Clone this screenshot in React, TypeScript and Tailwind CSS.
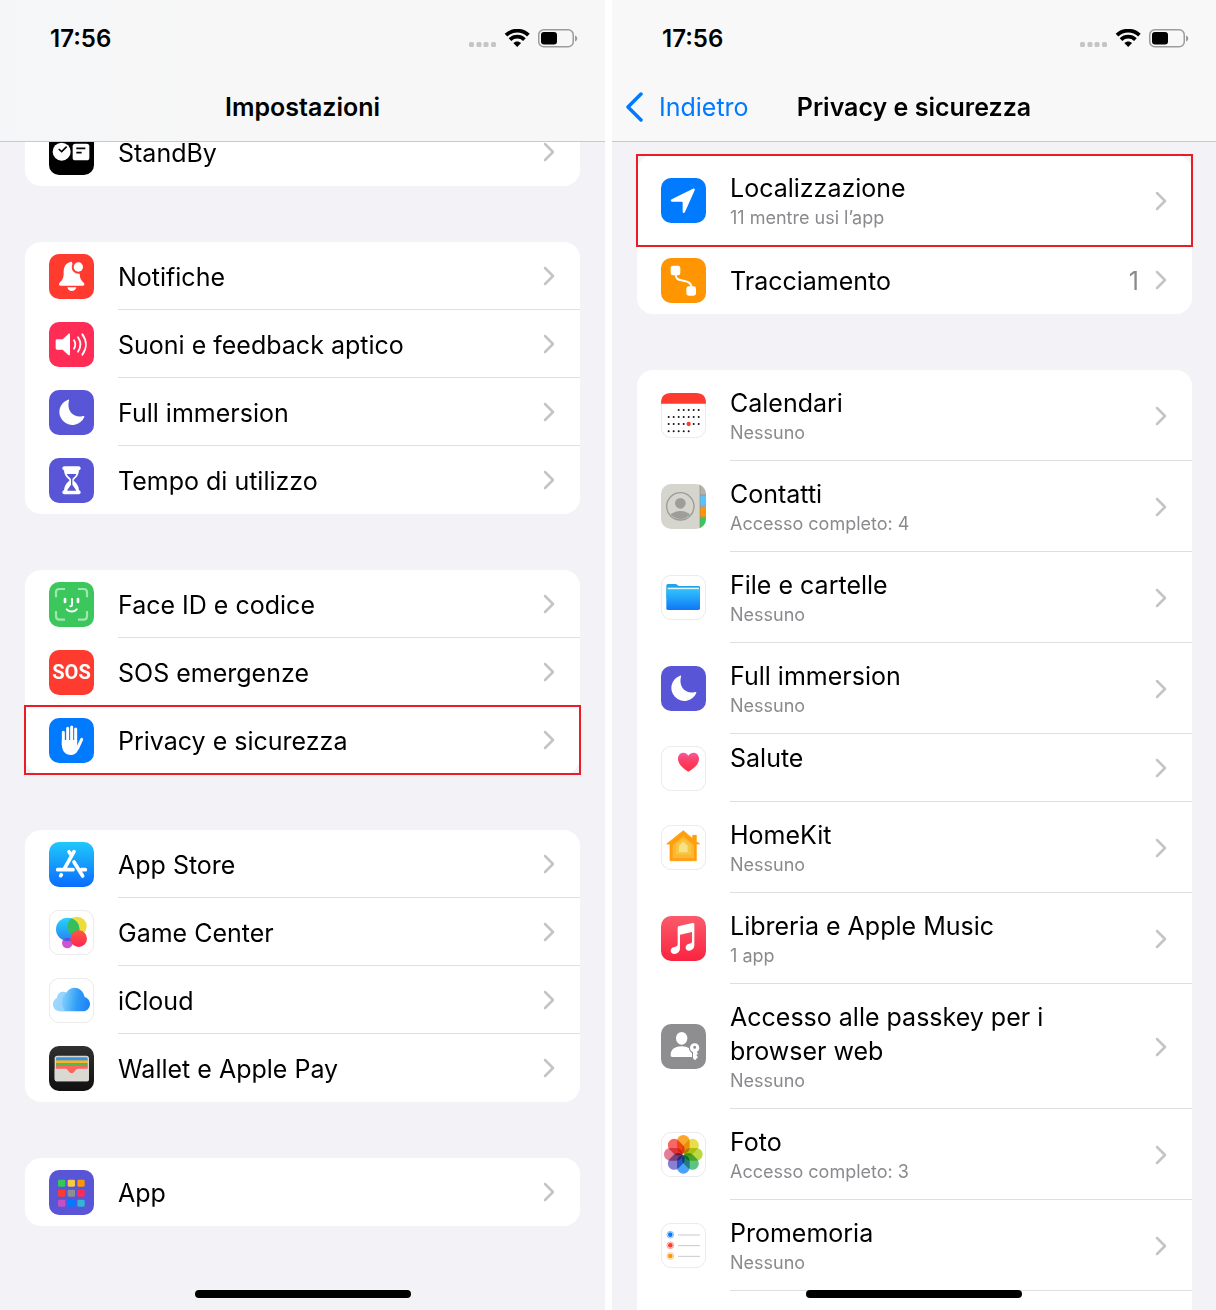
import type { ReactNode } from "react";

type Row = {
  label: string;
  icon: ReactNode;
  detail?: string;
  value?: string;
  highlighted?: boolean;
  raised?: boolean;
};

function Tile({ fill, border, children }: { fill: string; border?: boolean; children?: ReactNode }) {
  return (
    <svg viewBox="0 0 135 135" className="size-[45px] shrink-0" aria-hidden="true">
      <rect
        x={border ? 1 : 0}
        y={border ? 1 : 0}
        width={border ? 133 : 135}
        height={border ? 133 : 135}
        rx="30"
        fill={fill}
        stroke={border ? "#e9e9eb" : "none"}
        strokeWidth="3"
      />
      {children}
    </svg>
  );
}

const StandByIcon = () => (
  <Tile fill="#000">
    <circle cx="38" cy="65" r="27" fill="#fff" />
    <path d="M29 57l9 8 15-15" fill="none" stroke="#000" strokeWidth="5" />
    <rect x="71" y="41" width="50" height="50" rx="8" fill="#fff" />
    <path d="M82 55h27M82 68h16" stroke="#000" strokeWidth="5" />
  </Tile>
);

const BellIcon = () => (
  <Tile fill="#ff3b30">
    <path d="M68 23C50 25 44 38 44 55c0 17-3 23-12 31-4 4-2 9 3 9h66c5 0 7-5 3-9-9-8-11-14-12-27L75 40z" fill="#fff" />
    <circle cx="88" cy="39" r="20" fill="#ff3b30" />
    <circle cx="88" cy="39" r="14" fill="#fff" />
    <path d="M55 100h27c-1 7-7 11-13.500 11S56 107 55 100z" fill="#fff" />
  </Tile>
);

const SoundIcon = () => (
  <Tile fill="#ff2d55">
    <path d="M24 52h17l17-16c3-3 5-1 5 2v58c0 4-3 5-6 2L41 83H24c-2 0-4-2-4-4V56c0-2 2-4 4-4z" fill="#fff" />
    <g fill="none" stroke="#fff" strokeWidth="5.500" strokeLinecap="round">
      <path d="M75 55c5 8 5 17 0 25" />
      <path d="M87 46c9 13 9 30 0 43" />
      <path d="M100 37c14 19 14 42 0 61" />
    </g>
  </Tile>
);

const MoonIcon = () => (
  <Tile fill="#5856d6">
    <path d="M57 29c3-1 4 1 3 3-8 30 14 54 42 46 3-1 5 1 4 3A39 39 0 1 1 57 29z" fill="#fff" />
  </Tile>
);

const HourglassIcon = () => (
  <Tile fill="#5856d6">
    <path
      fillRule="evenodd"
      fill="#fff"
      d="M46 25h43c4 0 6 3 6 6s-2 5-5 6c-1 15-8 22-14 27-3 2-3 4 0 6 6 5 13 13 14 27 3 1 5 3 5 6s-2 6-6 6H46c-4 0-6-3-6-6s2-5 5-6c1-14 8-22 14-27 3-2 3-4 0-6-6-5-13-12-14-27-3-1-5-3-5-6s2-6 6-6zM53 48c3 6 7 9 11 13 2 2 2 4 2 7v12L55 96v2h26v-2L70 80V68c0-3 0-5 2-7 4-4 8-7 10-13z"
    />
  </Tile>
);

const FaceIcon = () => (
  <Tile fill="#3cc75c">
    <path
      d="M21 46V31c0-7 3-10 10-10h17M87 21h17c7 0 10 3 10 10v15M114 87v16c0 7-3 10-10 10H87M48 113H31c-7 0-10-3-10-10V87"
      fill="none"
      stroke="#a3e5b2"
      strokeWidth="6.500"
    />
    <g fill="none" stroke="#fff" strokeLinecap="round" strokeWidth="6">
      <path d="M48 51v9M87 51v9" strokeWidth="8" />
      <path d="M69 51v19c0 2-2 3-5 3" />
      <path d="M53 82c9 9 22 9 30 0" />
    </g>
  </Tile>
);

const SosIcon = () => (
  <span className="flex size-[45px] shrink-0 items-center justify-center rounded-[10px] bg-[#ff3b30] font-['Liberation_Sans_Narrow','Roboto',sans-serif] text-[20px] leading-none font-bold text-white">
    SOS
  </span>
);

const HandIcon = () => (
  <Tile fill="#007aff">
    <g stroke="#fff" strokeLinecap="round" strokeLinejoin="round" fill="none">
      <path d="M43 43v38M56 31v40M68 27v44M80 33v40" strokeWidth="9" />
      <path d="M98 64L86 90" strokeWidth="9" />
    </g>
    <path d="M38.500 66H84.500v18l10-9c-6 21-11 36-28 36-19 0-28-13-28-32z" fill="#fff" />
  </Tile>
);

const StoreIcon = () => (
  <Tile fill="url(#store)">
    <defs>
      <linearGradient id="store" x2="0" y2="1">
        <stop stopColor="#20c8fb" />
        <stop offset="1" stopColor="#0a6cff" />
      </linearGradient>
    </defs>
    <g stroke="#fff" strokeWidth="11" strokeLinecap="round" fill="none">
      <path d="M75 29L45 82M60 29l8 12M26 83h46M37 98l-2 3M75 60l26 42M97 83h12" />
    </g>
  </Tile>
);

const GameIcon = () => (
  <Tile fill="#fff" border>
    <defs>
      <linearGradient id="game" x2="0" y2="1">
        <stop stopColor="#2bd2fa" />
        <stop offset="1" stopColor="#2583f5" />
      </linearGradient>
      <linearGradient id="gamepink" x2="0" y2="1">
        <stop stopColor="#fb5a3c" />
        <stop offset="1" stopColor="#ff2459" />
      </linearGradient>
      <clipPath id="gameblue">
        <circle cx="56" cy="58" r="35" />
      </clipPath>
    </defs>
    <circle cx="55" cy="99" r="16" fill="#cb54d0" />
    <circle cx="84" cy="49" r="29" fill="#efdc3a" />
    <circle cx="56" cy="58" r="35" fill="url(#game)" />
    <g clipPath="url(#gameblue)">
      <circle cx="84" cy="49" r="29" fill="#37be5c" />
      <circle cx="55" cy="99" r="16" fill="#6a4be0" />
    </g>
    <circle cx="89" cy="86" r="25" fill="url(#gamepink)" />
  </Tile>
);

const CloudIcon = () => (
  <Tile fill="#fff" border>
    <defs>
      <linearGradient id="cloud" x1="12" x2="123" y1="60" y2="76" gradientUnits="userSpaceOnUse">
        <stop stopColor="#a4d8ff" />
        <stop offset=".35" stopColor="#6dc4fb" />
        <stop offset=".65" stopColor="#2f9df6" />
        <stop offset="1" stopColor="#1f80f8" />
      </linearGradient>
    </defs>
    <path d="M34 100c-12 0-22-9-22-21 0-9 6-17 13-20 0-15 15-22 27-15 13-22 47-20 55 13 9 3 16 11 16 21 0 12-9 22-21 22z" fill="url(#cloud)" />
    <path d="M52 44c-9-5-27-1-27 15-7 3-13 11-13 20 0 12 10 21 22 21h15c-12-18-13-38 3-56z" fill="#a4d8ff" opacity=".65" />
  </Tile>
);

const WalletIcon = () => (
  <Tile fill="url(#wallet)">
    <defs>
      <linearGradient id="wallet" x2="0" y2="1">
        <stop stopColor="#303030" />
        <stop offset="1" stopColor="#101010" />
      </linearGradient>
    </defs>
    <rect x="17" y="29" width="103" height="77" rx="8" fill="#d9d8d2" />
    <rect x="21" y="34" width="95" height="13" rx="4" fill="#3296e3" />
    <path d="M21 43h95v12H21z" fill="#f9b32a" />
    <path d="M21 51h95v12H21z" fill="#52b755" />
    <path d="M21 59h95v10H86c-6 0-8 13-18 13S56 69 50 69H21z" fill="#fb665f" />
    <path d="M17 68h33c7 0 8 13 18 13s12-13 19-13h33v30c0 6-3 8-8 8H25c-6 0-8-3-8-8z" fill="#d9d8d2" />
  </Tile>
);

const appColors = ["#35c759", "#f7c945", "#ff9500", "#ff3b30", "#8e8e93", "#ff2d55", "#c54fc5", "#007aff", "#30b6d6"];

const AppsIcon = () => (
  <Tile fill="#5856d6">
    {appColors.map((color, i) => (
      <rect key={color} x={27 + (i % 3) * 29} y={29 + Math.floor(i / 3) * 30} width="22" height="21" rx="4" fill={color} />
    ))}
  </Tile>
);

const LocationIcon = () => (
  <Tile fill="#007aff">
    <path d="M96 32c4-2 7 1 5 5l-29 65c-2 4-7 4-7-1V74c0-2-1-3-3-3H33c-5 0-5-5-1-7z" fill="#fff" />
  </Tile>
);

const TrackingIcon = () => (
  <Tile fill="#ff9500">
    <rect x="29" y="23" width="29" height="29" rx="7" fill="#fff" />
    <rect x="76" y="85" width="29" height="28" rx="7" fill="#fff" />
    <path d="M44 48c0 16 8 17 22 20s25 5 25 20" fill="none" stroke="#fff" strokeWidth="6" />
  </Tile>
);

const calendarDots = [
  [51, 2, 6],
  [72, 0, 6],
  [93, 0, 6],
  [115, 0, 4],
].flatMap(([y, from, to]) => Array.from({ length: to - from + 1 }, (_, i) => ({ x: 23 + (from + i) * 15, y })));

const CalendarIcon = () => (
  <Tile fill="#fff" border>
    <path d="M0 32C0 10 10 0 30 0h75c20 0 30 10 30 32z" fill="#ff3b30" />
    {calendarDots.map(({ x, y }) => (
      <circle key={`${x}-${y}`} cx={x} cy={y} r="3" fill="#111" />
    ))}
    <circle cx="83" cy="93" r="6.500" fill="#ff3b30" />
  </Tile>
);

const ContactsIcon = () => (
  <Tile fill="#d5d5ce">
    <defs>
      <clipPath id="tile">
        <rect width="135" height="135" rx="30" />
      </clipPath>
      <clipPath id="avatar">
        <circle cx="58" cy="67" r="38" />
      </clipPath>
    </defs>
    <g clipPath="url(#tile)">
      <path d="M117 0h18v33h-18z" fill="#b3b3ae" />
      <path d="M117 33h18v34h-18z" fill="#5ac1fb" />
      <path d="M117 68h18v32h-18z" fill="#ff9500" />
      <path d="M117 100h18v35h-18z" fill="#3ac759" />
      <path d="M117 0v135M117 33h18M117 67h18M117 99h18" stroke="#8b8b86" strokeWidth="2" />
    </g>
    <circle cx="58" cy="67" r="41" fill="none" stroke="#9d9d99" strokeWidth="4" />
    <circle cx="58" cy="58" r="16" fill="#9d9d99" />
    <ellipse cx="58" cy="103" rx="34" ry="22" fill="#9d9d99" clipPath="url(#avatar)" />
  </Tile>
);

const FilesIcon = () => (
  <Tile fill="#fff" border>
    <defs>
      <linearGradient id="folder" x2="0" y2="1">
        <stop stopColor="#2fc3fa" />
        <stop offset="1" stopColor="#1077f8" />
      </linearGradient>
    </defs>
    <path d="M16 33c0-4 2-6 6-6h20c7 0 7 6 14 6h56c4 0 5 2 5 6v30H16z" fill="#1fa4e8" />
    <path d="M20 38h94v6H20z" fill="#e4f6fd" />
    <path d="M16 43h101v57c0 4-2 5-5 5H21c-4 0-5-2-5-5z" fill="url(#folder)" />
  </Tile>
);

const HealthIcon = () => (
  <Tile fill="#fff" border>
    <defs>
      <linearGradient id="heart" x2="0" y2="1">
        <stop stopColor="#f559a0" />
        <stop offset=".35" stopColor="#fa4470" />
        <stop offset="1" stopColor="#ff2d3c" />
      </linearGradient>
    </defs>
    <path d="M82 77C71 70 51 57 51 38c0-20 23-24 31-9 9-15 32-11 32 9 0 19-20 32-32 39z" fill="url(#heart)" />
  </Tile>
);

const HomeIcon = () => (
  <Tile fill="#fff" border>
    <path d="M67 17l28 24V31h11v19l10 7H106v50H27V57H17z" fill="#ff9f0a" stroke="#ff9500" strokeWidth="2" strokeLinejoin="round" />
    <path d="M67 33l32 27v40H35V60z" fill="#fdb437" />
    <path d="M67 40l23 20v29H45V60z" fill="#f5c83f" />
    <path d="M67 50l13 12v20H54V62z" fill="#fae08a" />
  </Tile>
);

const MusicIcon = () => (
  <Tile fill="url(#music)">
    <defs>
      <linearGradient id="music" x2="0" y2="1">
        <stop stopColor="#fb5b6c" />
        <stop offset="1" stopColor="#fa2440" />
      </linearGradient>
    </defs>
    <path d="M50 37c0-4 1-6 5-7l39-9c4-1 6 1 6 4v63c0 9-6 15-15 16-14 1-15-18-1-21 7-1 9-2 9-8V48l-36 8v41c0 9-5 16-15 17-16 1-18-18-2-21 8-2 10-3 10-9z" fill="#fff" />
  </Tile>
);

const PasskeyIcon = () => (
  <Tile fill="#8e8e91">
    <ellipse cx="62" cy="43" rx="17" ry="19" fill="#fff" />
    <path d="M29 93c0-18 15-26 33-26 9 0 17 2 23 6 1 7 4 11 8 14v12H34c-4 0-5-2-5-6z" fill="#fff" />
    <circle cx="101" cy="72" r="17" fill="#8e8e91" />
    <path fillRule="evenodd" d="M101 58c8 0 14 6 14 14 0 6-4 10-8 12l4 5-5 5 5 5-9 10-6-6V84c-5-2-9-7-9-13 0-7 6-13 14-13zm0 7a4.500 4.500 0 1 0 0 9 4.500 4.500 0 0 0 0-9z" fill="#fff" />
  </Tile>
);

const petals = ["#f9a01b", "#e8dc35", "#b4d635", "#4fc07a", "#3c9bf5", "#7d75d0", "#e2728f", "#f85a55"];

const PhotosIcon = () => (
  <Tile fill="#fff" border>
    {petals.map((color, i) => (
      <rect key={color} x="48" y="9" width="38" height="56" rx="19" fill={color} opacity=".92" className="mix-blend-multiply" transform={`rotate(${i * 45} 67 67)`} />
    ))}
  </Tile>
);

const reminders = ["#007aff", "#ff3b30", "#ff9500"];

const RemindersIcon = () => (
  <Tile fill="#fff" border>
    {reminders.map((color, i) => (
      <g key={color}>
        <circle cx="28" cy={35 + i * 32} r="10" fill="none" stroke={color} strokeWidth="2.500" opacity=".6" />
        <circle cx="28" cy={35 + i * 32} r="7" fill={color} />
        <path d={`M51 ${36 + i * 32}h66`} stroke="#c9c9cd" strokeWidth="3" />
      </g>
    ))}
  </Tile>
);

function Chevron() {
  return (
    <svg viewBox="0 0 12 20" className="h-5 w-3 shrink-0" aria-hidden="true">
      <path d="M2 2l8 8-8 8" fill="none" stroke="#c4c4c7" strokeWidth="2.500" strokeLinecap="round" strokeLinejoin="round" />
    </svg>
  );
}

function SettingsRow({ row, divided }: { row: Row; divided: boolean }) {
  return (
    <li className="relative">
      <button type="button" className="flex w-full gap-6 pl-6 text-left">
        <span className="flex items-center">{row.icon}</span>
        <span
          className={`flex flex-1 items-center gap-4 border-b pr-[25px] ${divided ? "border-[#dfdfe1]" : "border-transparent"} ${
            row.detail ? "pt-4 pb-3.5" : "min-h-[68px]"
          }`}
        >
          <span className={`flex flex-1 flex-col ${row.raised ? "pb-5" : row.detail ? "" : "pt-0.5"}`}>
            <span className="max-w-[340px] text-[25px] leading-[34px] text-black">{row.label}</span>
            {row.detail && <span className="text-[18px] leading-[26px] text-[#8a8a8e]">{row.detail}</span>}
          </span>
          {row.value && <span className="pt-0.5 text-[25px] leading-[34px] text-[#8a8a8e]">{row.value}</span>}
          <Chevron />
        </span>
      </button>
      {row.highlighted && <span className="pointer-events-none absolute -inset-px z-10 border-2 border-[#ea1c24]" />}
    </li>
  );
}

function Card({ rows, continues = false }: { rows: Row[]; continues?: boolean }) {
  return (
    <ul className={`bg-white ${continues ? "flex-1 rounded-t-2xl" : "rounded-2xl"}`}>
      {rows.map((row, i) => (
        <SettingsRow key={row.label} row={row} divided={continues || i < rows.length - 1} />
      ))}
    </ul>
  );
}

function StatusBar() {
  return (
    <div className="flex h-[76px] items-center justify-between pt-0.5 pr-[27px] pl-[50px]">
      <span className="text-[24px] leading-8 font-semibold">17:56</span>
      <svg viewBox="0 0 110 20" className="h-5 w-[110px]" aria-label="Wi-Fi, batteria" role="img">
        <g fill="#c5c5c8">
          <rect x="1" y="13" width="5" height="5" rx="1.500" />
          <rect x="8.500" y="13" width="5" height="5" rx="1.500" />
          <rect x="15.500" y="13" width="5" height="5" rx="1.500" />
          <rect x="23" y="13" width="5" height="5" rx="1.500" />
        </g>
        <g fill="none" stroke="#000" strokeWidth="3.800">
          <path d="M38 6.200c6.200-6 16.200-6 22.400 0" />
          <path d="M42 10.600c4-3.900 10.400-3.900 14.400 0" />
        </g>
        <path d="M45.300 14.100c2.200-2.100 5.600-2.100 7.800 0L49.200 18z" />
        <rect x="70.750" y=".75" width="34.500" height="17" rx="5" fill="none" stroke="#9c9c9e" strokeWidth="1.500" />
        <rect x="73" y="3" width="16" height="12.500" rx="3" />
        <path d="M107 6.500c3 1 3 5 0 6z" fill="#9c9c9e" />
      </svg>
    </div>
  );
}

function Header({ title, back, className }: { title: string; back?: string; className: string }) {
  return (
    <header className={`relative z-10 border-b border-[#c9c9cb] pb-[3px] ${className}`}>
      <StatusBar />
      <div className="grid h-[62px] grid-cols-[1fr_auto_1fr] items-center">
        <div className="pl-3.5">
          {back && (
            <button type="button" className="flex items-center gap-3.5 text-[25px] leading-8 text-[#007aff]">
              <svg viewBox="0 0 19 32" className="h-8 w-[19px]" aria-hidden="true">
                <path d="M15 3L2 16l13 13" fill="none" stroke="currentColor" strokeWidth="3.500" strokeLinecap="round" strokeLinejoin="round" />
              </svg>
              {back}
            </button>
          )}
        </div>
        <h1 className="text-[25px] leading-8 font-semibold">{title}</h1>
      </div>
    </header>
  );
}

function HomeIndicator() {
  return <div className="absolute bottom-3 left-1/2 z-20 h-2 w-[216px] -translate-x-1/2 rounded-full bg-black" />;
}

const alerts: Row[] = [
  { label: "Notifiche", icon: <BellIcon /> },
  { label: "Suoni e feedback aptico", icon: <SoundIcon /> },
  { label: "Full immersion", icon: <MoonIcon /> },
  { label: "Tempo di utilizzo", icon: <HourglassIcon /> },
];

const security: Row[] = [
  { label: "Face ID e codice", icon: <FaceIcon /> },
  { label: "SOS emergenze", icon: <SosIcon /> },
  { label: "Privacy e sicurezza", icon: <HandIcon />, highlighted: true },
];

const services: Row[] = [
  { label: "App Store", icon: <StoreIcon /> },
  { label: "Game Center", icon: <GameIcon /> },
  { label: "iCloud", icon: <CloudIcon /> },
  { label: "Wallet e Apple Pay", icon: <WalletIcon /> },
];

const tracking: Row[] = [
  { label: "Localizzazione", detail: "11 mentre usi l’app", icon: <LocationIcon />, highlighted: true },
  { label: "Tracciamento", value: "1", icon: <TrackingIcon /> },
];

const permissions: Row[] = [
  { label: "Calendari", detail: "Nessuno", icon: <CalendarIcon /> },
  { label: "Contatti", detail: "Accesso completo: 4", icon: <ContactsIcon /> },
  { label: "File e cartelle", detail: "Nessuno", icon: <FilesIcon /> },
  { label: "Full immersion", detail: "Nessuno", icon: <MoonIcon /> },
  { label: "Salute", raised: true, icon: <HealthIcon /> },
  { label: "HomeKit", detail: "Nessuno", icon: <HomeIcon /> },
  { label: "Libreria e Apple Music", detail: "1 app", icon: <MusicIcon /> },
  { label: "Accesso alle passkey per i browser web", detail: "Nessuno", icon: <PasskeyIcon /> },
  { label: "Foto", detail: "Accesso completo: 3", icon: <PhotosIcon /> },
  { label: "Promemoria", detail: "Nessuno", icon: <RemindersIcon /> },
];

export default function App() {
  return (
    <main className="grid min-h-screen grid-cols-[605fr_604fr] gap-[7px] bg-white font-['Inter',sans-serif] text-black">
      <section className="relative flex flex-col bg-[#f2f2f7]">
        <Header title="Impostazioni" className="bg-[#f7f7f7] bg-linear-to-r from-[#f4f6f8] to-[#f7f7f7] to-30%" />
        <div className="-mt-6 flex flex-col gap-14 px-[25px]">
          <Card rows={[{ label: "StandBy", icon: <StandByIcon /> }]} />
          <Card rows={alerts} />
          <Card rows={security} />
          <Card rows={services} />
          <Card rows={[{ label: "App", icon: <AppsIcon /> }]} />
        </div>
        <HomeIndicator />
      </section>
      <section className="relative flex flex-col bg-[#f2f2f7]">
        <Header title="Privacy e sicurezza" back="Indietro" className="bg-[#f8f8f9]" />
        <div className="flex flex-1 flex-col gap-14 pt-[13px] pr-6 pl-[25px]">
          <Card rows={tracking} />
          <Card rows={permissions} continues />
        </div>
        <HomeIndicator />
      </section>
    </main>
  );
}
